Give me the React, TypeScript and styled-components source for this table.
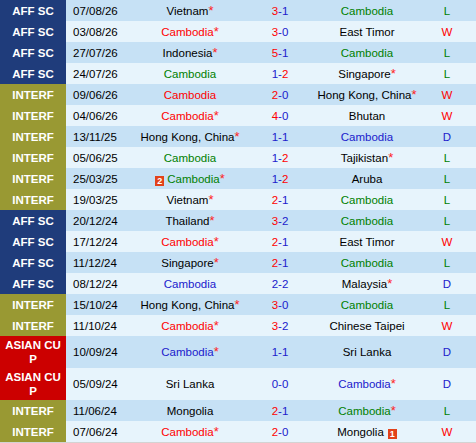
import React from 'react';
import styled, { createGlobalStyle } from 'styled-components';

type Tone = 'plain' | 'red' | 'green' | 'blue';
type Comp = 'AFF SC' | 'INTERF' | 'ASIAN CUP';

interface Side {
  name: string;
  tone: Tone;
  star?: boolean;
  card?: { count: number; before?: boolean };
}

interface Match {
  comp: Comp;
  date: string;
  home: Side;
  away: Side;
  score: [number, number];
  result: 'W' | 'L' | 'D';
}

const palette = {
  red: '#ff0000',
  green: '#008000',
  blue: '#2020cc',
  plain: '#000000',
  rowDark: '#c6e1f5',
  rowLight: '#e7f4fc',
  card: '#e2421a',
};

const compColors: Record<Comp, string> = {
  'AFF SC': '#1f3c7b',
  INTERF: '#999933',
  'ASIAN CUP': '#cc0000',
};

const C = (tone: Tone, star = false): Side => ({ name: 'Cambodia', tone, star });
const T = (name: string, star = false): Side => ({ name, tone: 'plain', star });

const matches: Match[] = [
  { comp: 'AFF SC', date: '07/08/26', home: T('Vietnam', true), score: [3, 1], away: C('green'), result: 'L' },
  { comp: 'AFF SC', date: '03/08/26', home: C('red', true), score: [3, 0], away: T('East Timor'), result: 'W' },
  { comp: 'AFF SC', date: '27/07/26', home: T('Indonesia', true), score: [5, 1], away: C('green'), result: 'L' },
  { comp: 'AFF SC', date: '24/07/26', home: C('green'), score: [1, 2], away: T('Singapore', true), result: 'L' },
  { comp: 'INTERF', date: '09/06/26', home: C('red'), score: [2, 0], away: T('Hong Kong, China', true), result: 'W' },
  { comp: 'INTERF', date: '04/06/26', home: C('red', true), score: [4, 0], away: T('Bhutan'), result: 'W' },
  { comp: 'INTERF', date: '13/11/25', home: T('Hong Kong, China', true), score: [1, 1], away: C('blue'), result: 'D' },
  { comp: 'INTERF', date: '05/06/25', home: C('green'), score: [1, 2], away: T('Tajikistan', true), result: 'L' },
  {
    comp: 'INTERF',
    date: '25/03/25',
    home: { name: 'Cambodia', tone: 'green', star: true, card: { count: 2, before: true } },
    score: [1, 2],
    away: T('Aruba'),
    result: 'L',
  },
  { comp: 'INTERF', date: '19/03/25', home: T('Vietnam', true), score: [2, 1], away: C('green'), result: 'L' },
  { comp: 'AFF SC', date: '20/12/24', home: T('Thailand', true), score: [3, 2], away: C('green'), result: 'L' },
  { comp: 'AFF SC', date: '17/12/24', home: C('red', true), score: [2, 1], away: T('East Timor'), result: 'W' },
  { comp: 'AFF SC', date: '11/12/24', home: T('Singapore', true), score: [2, 1], away: C('green'), result: 'L' },
  { comp: 'AFF SC', date: '08/12/24', home: C('blue'), score: [2, 2], away: T('Malaysia', true), result: 'D' },
  { comp: 'INTERF', date: '15/10/24', home: T('Hong Kong, China', true), score: [3, 0], away: C('green'), result: 'L' },
  { comp: 'INTERF', date: '11/10/24', home: C('red', true), score: [3, 2], away: T('Chinese Taipei'), result: 'W' },
  { comp: 'ASIAN CUP', date: '10/09/24', home: C('blue', true), score: [1, 1], away: T('Sri Lanka'), result: 'D' },
  { comp: 'ASIAN CUP', date: '05/09/24', home: T('Sri Lanka'), score: [0, 0], away: C('blue', true), result: 'D' },
  { comp: 'INTERF', date: '11/06/24', home: T('Mongolia'), score: [2, 1], away: C('green', true), result: 'L' },
  {
    comp: 'INTERF',
    date: '07/06/24',
    home: C('red', true),
    score: [2, 0],
    away: { name: 'Mongolia', tone: 'plain', card: { count: 1 } },
    result: 'W',
  },
];

const resultTone: Record<Match['result'], Tone> = { W: 'red', L: 'green', D: 'blue' };

const GlobalStyle = createGlobalStyle`
  html, body {
    margin: 0;
    padding: 0;
    background: #fff;
  }
  body {
    font-family: "Liberation Sans", Arial, sans-serif;
    font-size: 11.5px;
  }
`;

const Table = styled.div`
  width: 476px;
  border-bottom: 1px solid #d3d3d3;
`;

const Row = styled.div<{ $alt: boolean }>`
  display: grid;
  grid-template-columns: 66px 52px 144px 36px 138px 1fr;
  min-height: 21px;
  background: ${(p) => (p.$alt ? palette.rowLight : palette.rowDark)};
`;

const Cell = styled.div`
  display: flex;
  align-items: center;
  justify-content: center;
  line-height: 14px;
  white-space: nowrap;
`;

const CompCell = styled(Cell)<{ $comp: Comp }>`
  padding: 2px 3px;
  background: ${(p) => compColors[p.$comp]};
  color: #fff;
  font-weight: bold;
  text-align: center;
  white-space: normal;
  word-break: break-all;
`;

const DateCell = styled(Cell)`
  justify-content: flex-start;
  padding-left: 7px;
  color: #000;
`;

const ResultCell = styled(Cell)<{ $tone: Tone }>`
  padding-right: 18px;
  color: ${(p) => palette[p.$tone]};
`;

const Team = styled.span<{ $tone: Tone }>`
  color: ${(p) => palette[p.$tone]};
`;

const Star = styled.span`
  color: #ff2222;
  font-size: 13px;
`;

const Goal = styled.span<{ $win: boolean }>`
  color: ${(p) => (p.$win ? palette.red : palette.blue)};
`;

const Dash = styled.span`
  color: ${palette.blue};
`;

const Card = styled.span<{ $before?: boolean }>`
  display: inline-block;
  width: 9px;
  height: 10px;
  margin: ${(p) => (p.$before ? '0 3px 0 0' : '0 0 0 4px')};
  background: ${palette.card};
  color: #fff;
  font-size: 9px;
  font-weight: bold;
  line-height: 10px;
  text-align: center;
  vertical-align: -1px;
`;

const TeamName = ({ side }: { side: Side }) => (
  <span>
    {side.card?.before && <Card $before>{side.card.count}</Card>}
    <Team $tone={side.tone}>{side.name}</Team>
    {side.star && <Star>*</Star>}
    {side.card && !side.card.before && <Card>{side.card.count}</Card>}
  </span>
);

const Score = ({ score }: { score: [number, number] }) => {
  const [h, a] = score;
  return (
    <span>
      <Goal $win={h > a}>{h}</Goal>
      <Dash>-</Dash>
      <Goal $win={a > h}>{a}</Goal>
    </span>
  );
};

const App = () => (
  <>
    <GlobalStyle />
    <Table>
      {matches.map((m, i) => (
        <Row key={m.date + i} $alt={i % 2 === 1}>
          <CompCell $comp={m.comp}>{m.comp}</CompCell>
          <DateCell>{m.date}</DateCell>
          <Cell>
            <TeamName side={m.home} />
          </Cell>
          <Cell>
            <Score score={m.score} />
          </Cell>
          <Cell>
            <TeamName side={m.away} />
          </Cell>
          <ResultCell $tone={resultTone[m.result]}>{m.result}</ResultCell>
        </Row>
      ))}
    </Table>
  </>
);

export default App;
